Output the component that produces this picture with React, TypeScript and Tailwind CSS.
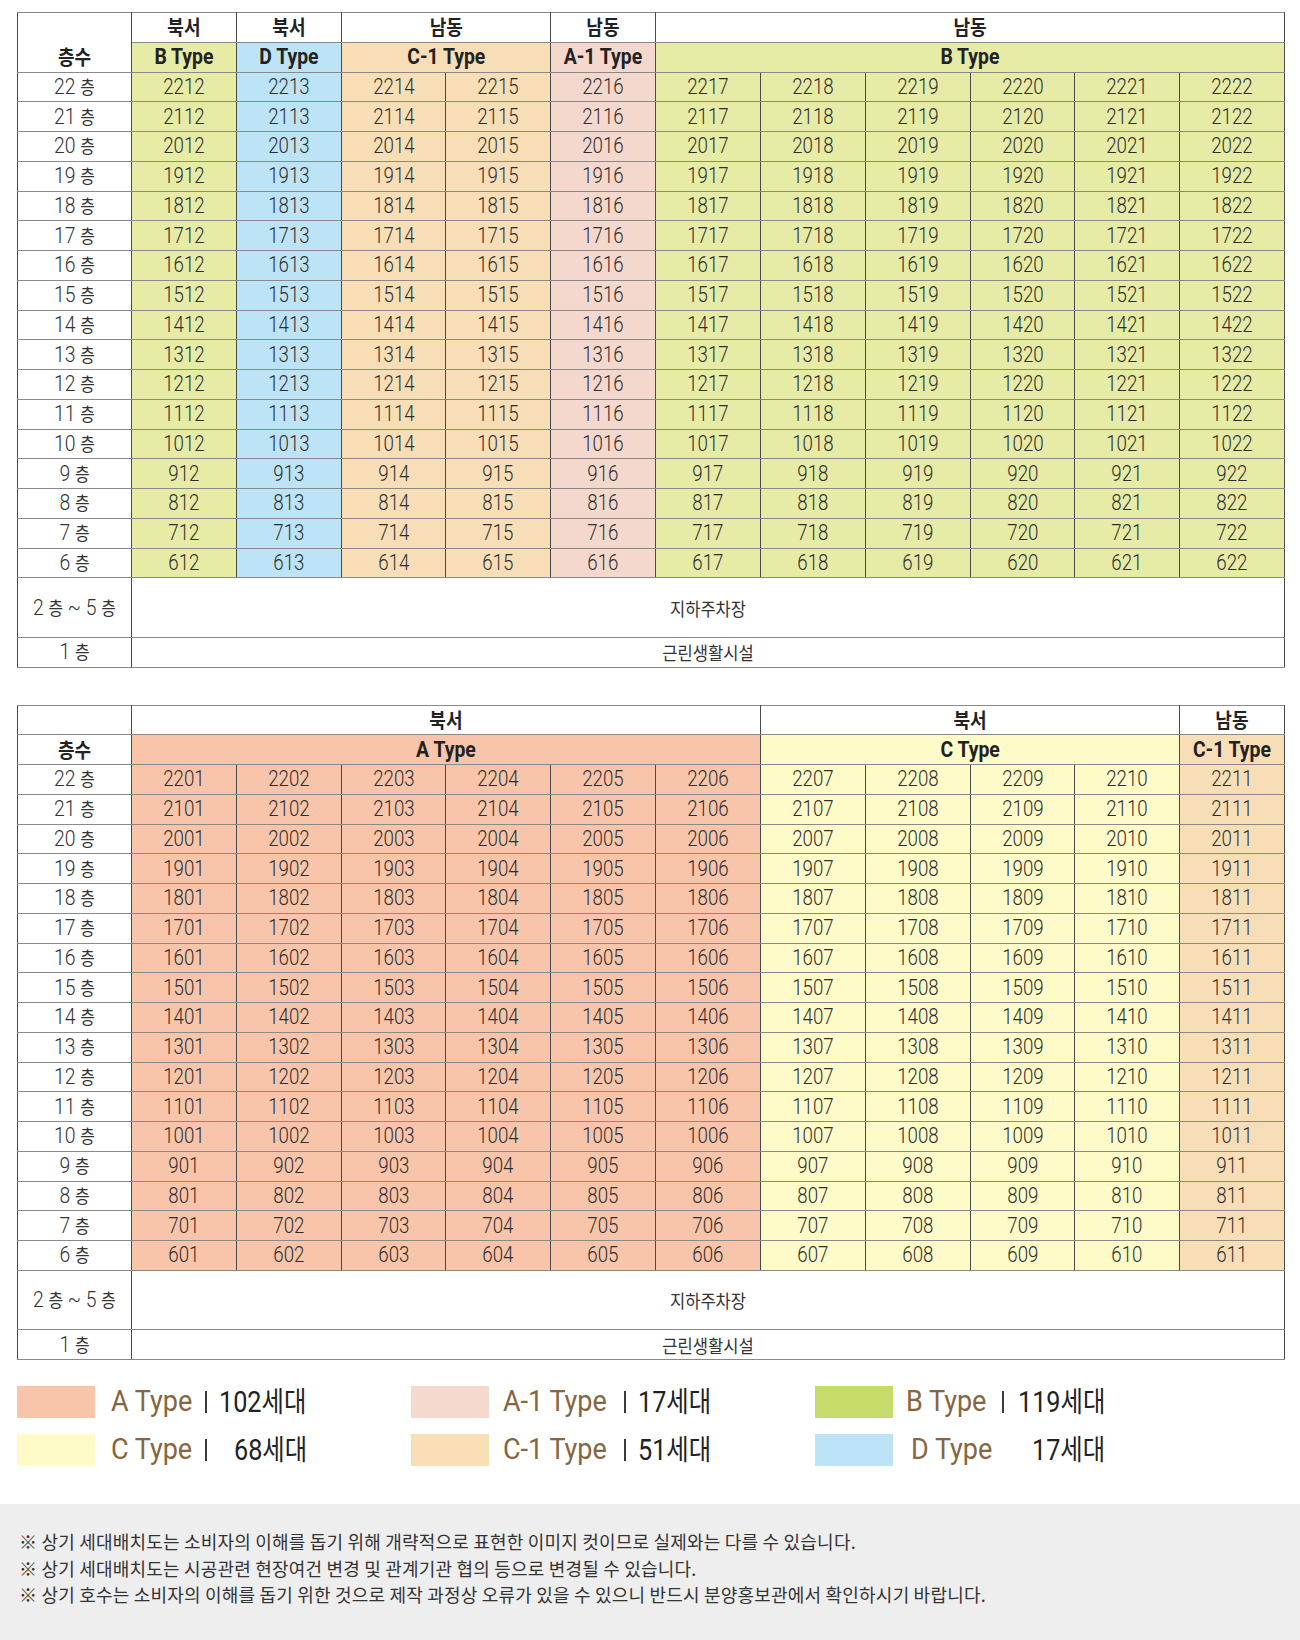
import React from "react";

type Col = { suf: string; c: string };

const BG: Record<string, string> = {
  A: "bg-[#f8c5aa]",
  A1: "bg-[#f5d8cd]",
  B: "bg-[#e6eba6]",
  C: "bg-[#fefbc8]",
  C1: "bg-[#f8deb6]",
  D: "bg-[#bde3f6]",
};

const FONT = "font-['Roboto','Noto_Sans_CJK_KR',sans-serif]";
const KFONT = "font-['Noto_Sans_CJK_KR',sans-serif]";

const floors = Array.from({ length: 17 }, (_, i) => 22 - i);

const t1Cols: Col[] = [
  { suf: "12", c: "B" },
  { suf: "13", c: "D" },
  { suf: "14", c: "C1" },
  { suf: "15", c: "C1" },
  { suf: "16", c: "A1" },
  { suf: "17", c: "B" },
  { suf: "18", c: "B" },
  { suf: "19", c: "B" },
  { suf: "20", c: "B" },
  { suf: "21", c: "B" },
  { suf: "22", c: "B" },
];

const t2Cols: Col[] = [
  { suf: "01", c: "A" },
  { suf: "02", c: "A" },
  { suf: "03", c: "A" },
  { suf: "04", c: "A" },
  { suf: "05", c: "A" },
  { suf: "06", c: "A" },
  { suf: "07", c: "C" },
  { suf: "08", c: "C" },
  { suf: "09", c: "C" },
  { suf: "10", c: "C" },
  { suf: "11", c: "C1" },
];

const cellB = "border-x border-x-[#4a4a4a] border-y border-y-[#8a8a8a] p-0 text-center leading-none";

type Head = { label: string; span: number; c?: string };

function Floor({ n }: { n: number }) {
  return (
    <span className="block scale-x-[0.88] font-light text-[22px] leading-none text-[#333] whitespace-nowrap">
      {n} <span className={`${KFONT} font-normal text-[18px]`}>층</span>
    </span>
  );
}

function KHead({ children }: { children: React.ReactNode }) {
  return (
    <span className={`block scale-x-[0.9] ${KFONT} font-bold text-[20px] text-[#222] leading-none`}>
      {children}
    </span>
  );
}

function Table({
  top,
  sub,
  cols,
  mergedFirst,
}: {
  top: Head[];
  sub: Head[];
  cols: Col[];
  mergedFirst: boolean;
}) {
  return (
    <table className={`ml-[17px] w-[1268px] table-fixed border-collapse border border-[#6a6a6a] ${FONT} text-[#333]`}>
      <colgroup>
        <col className="w-[114px]" />
        {cols.map((_, i) => (
          <col key={i} />
        ))}
      </colgroup>
      <tbody>
        <tr className="h-[29.75px]">
          {mergedFirst ? (
            <td rowSpan={2} className={`${cellB} bg-white align-bottom pb-[5px]`}>
              <KHead>층수</KHead>
            </td>
          ) : (
            <td className={`${cellB} bg-white align-middle`}></td>
          )}
          {top.map((h, i) => (
            <td key={i} colSpan={h.span} className={`${cellB} bg-white align-middle`}>
              <KHead>{h.label}</KHead>
            </td>
          ))}
        </tr>
        <tr className="h-[29.75px]">
          {!mergedFirst && (
            <td className={`${cellB} bg-white align-middle`}>
              <KHead>층수</KHead>
            </td>
          )}
          {sub.map((h, i) => (
            <td key={i} colSpan={h.span} className={`${cellB} ${BG[h.c || "B"]} align-middle`}>
              <span className="block scale-x-[0.88] font-bold text-[22px] text-[#222] leading-none whitespace-nowrap">
                {h.label}
              </span>
            </td>
          ))}
        </tr>
        {floors.map((f) => (
          <tr key={f} className="h-[29.75px]">
            <td className={`${cellB} bg-white align-middle`}>
              <Floor n={f} />
            </td>
            {cols.map((c, i) => (
              <td key={i} className={`${cellB} ${BG[c.c]} align-middle`}>
                <span className="block scale-x-[0.85] font-light text-[22px] leading-none text-[#2e2e2e]">
                  {f}
                  {c.suf}
                </span>
              </td>
            ))}
          </tr>
        ))}
        <tr className="h-[59.5px]">
          <td className={`${cellB} bg-white align-middle`}>
            <span className="block scale-x-[0.88] font-light text-[22px] leading-none text-[#333] whitespace-nowrap">
              2 <span className={`${KFONT} font-normal text-[18px]`}>층</span> ~ 5{" "}
              <span className={`${KFONT} font-normal text-[18px]`}>층</span>
            </span>
          </td>
          <td colSpan={11} className={`${cellB} bg-white align-middle`}>
            <span className={`block scale-x-[0.92] ${KFONT} text-[18px] text-[#333] leading-none`}>지하주차장</span>
          </td>
        </tr>
        <tr className="h-[29.75px]">
          <td className={`${cellB} bg-white align-middle`}>
            <Floor n={1} />
          </td>
          <td colSpan={11} className={`${cellB} bg-white align-middle`}>
            <span className={`block scale-x-[0.92] ${KFONT} text-[18px] text-[#333] leading-none`}>근린생활시설</span>
          </td>
        </tr>
      </tbody>
    </table>
  );
}

function Legend({
  sw,
  label,
  labelMl,
  labelW,
  pipe,
  num,
  numMl,
}: {
  sw: string;
  label: string;
  labelMl: string;
  labelW: string;
  pipe: boolean;
  num: string;
  numMl: string;
}) {
  return (
    <div className={`flex items-center h-[32px] ${FONT}`}>
      <div className={`w-[78px] h-[32px] shrink-0 ${sw}`} />
      <div className={`${labelMl} ${labelW} shrink-0`}>
        <span className="inline-block origin-left scale-x-[0.9] text-[30px] font-normal text-[#85663f] leading-none whitespace-nowrap">
          {label}
        </span>
      </div>
      {pipe && <span className="w-[2px] h-[22px] bg-[#3a3a3a] shrink-0" />}
      <div className={`${numMl} shrink-0`}>
        <span className="inline-block origin-left scale-x-[0.87] text-[29px] font-normal text-[#222] leading-none whitespace-nowrap">
          {num}
          <span className={`${KFONT} font-normal text-[28px]`}>세대</span>
        </span>
      </div>
    </div>
  );
}

export default function App() {
  return (
    <div className="w-[1300px] h-[1640px] bg-white flex flex-col pt-[12px]">
      <Table
        mergedFirst
        top={[
          { label: "북서", span: 1 },
          { label: "북서", span: 1 },
          { label: "남동", span: 2 },
          { label: "남동", span: 1 },
          { label: "남동", span: 6 },
        ]}
        sub={[
          { label: "B Type", span: 1, c: "B" },
          { label: "D Type", span: 1, c: "D" },
          { label: "C-1 Type", span: 2, c: "C1" },
          { label: "A-1 Type", span: 1, c: "A1" },
          { label: "B Type", span: 6, c: "B" },
        ]}
        cols={t1Cols}
      />
      <div className="h-[37px]" />
      <Table
        mergedFirst={false}
        top={[
          { label: "북서", span: 6 },
          { label: "북서", span: 4 },
          { label: "남동", span: 1 },
        ]}
        sub={[
          { label: "A Type", span: 6, c: "A" },
          { label: "C Type", span: 4, c: "C" },
          { label: "C-1 Type", span: 1, c: "C1" },
        ]}
        cols={t2Cols}
      />
      <div className="ml-[17px] mt-[26px] grid grid-cols-[394px_404px_auto] gap-y-[16px]">
        <Legend sw="bg-[#f8c4aa]" label="A Type" labelMl="ml-[16px]" labelW="w-[94px]" pipe num="102" numMl="ml-[12px]" />
        <Legend sw="bg-[#f5d9ce]" label="A-1 Type" labelMl="ml-[14px]" labelW="w-[121px]" pipe num="17" numMl="ml-[12px]" />
        <Legend sw="bg-[#c5dc6a]" label="B Type" labelMl="ml-[13px]" labelW="w-[96px]" pipe num="119" numMl="ml-[14px]" />
        <Legend sw="bg-[#fefbc9]" label="C Type" labelMl="ml-[16px]" labelW="w-[94px]" pipe num="68" numMl="ml-[27px]" />
        <Legend sw="bg-[#f8dfb5]" label="C-1 Type" labelMl="ml-[14px]" labelW="w-[121px]" pipe num="51" numMl="ml-[12px]" />
        <Legend sw="bg-[#bde3f7]" label="D Type" labelMl="ml-[18px]" labelW="w-[121px]" pipe={false} num="17" numMl="ml-[0px]" />
      </div>
      <div className={`mt-auto h-[136px] bg-[#eeeeee] pt-[24px] pl-[19px] ${KFONT} text-[18px] tracking-[0.2px] leading-[26.5px] text-[#333]`}>
        <p>※ 상기 세대배치도는 소비자의 이해를 돕기 위해 개략적으로 표현한 이미지 컷이므로 실제와는 다를 수 있습니다.</p>
        <p>※ 상기 세대배치도는 시공관련 현장여건 변경 및 관계기관 협의 등으로 변경될 수 있습니다.</p>
        <p>※ 상기 호수는 소비자의 이해를 돕기 위한 것으로 제작 과정상 오류가 있을 수 있으니 반드시 분양홍보관에서 확인하시기 바랍니다.</p>
      </div>
    </div>
  );
}
